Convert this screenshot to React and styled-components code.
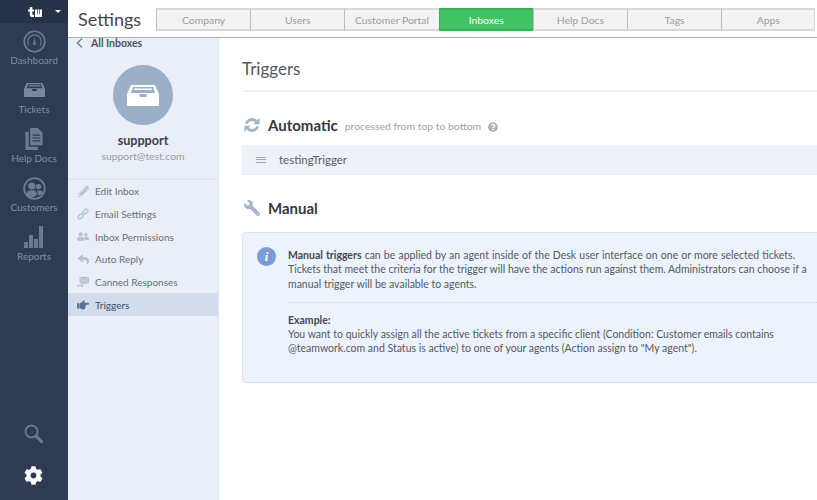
import React from 'react';
import styled, { createGlobalStyle } from 'styled-components';
import { FaCog, FaHandPointRight, FaPencilAlt, FaQuestionCircle, FaReply, FaUserFriends, FaWrench } from 'react-icons/fa';

const Global = createGlobalStyle`
  html, body { margin: 0; padding: 0; height: 500px; overflow: hidden; background: #fff; }
  body { font-family: Lato, "Open Sans", sans-serif; color: #4a4f57; }
  * { box-sizing: border-box; }
`;

const Page = styled.div`
  display: flex;
  width: 817px;
  height: 500px;
  overflow: hidden;
`;

const Rail = styled.nav`
  width: 68px;
  flex: none;
  display: flex;
  flex-direction: column;
  background: #2e3b52;
`;

const RailTop = styled.div`
  height: 23px;
  margin-bottom: 1px;
  background: #263247;
  display: flex;
  align-items: center;
  justify-content: flex-end;
  gap: 13px;
  padding-right: 7px;
`;

const Caret = styled.span`
  width: 0;
  height: 0;
  border-left: 3.5px solid transparent;
  border-right: 3.5px solid transparent;
  border-top: 3.5px solid #fff;
`;

const RailItem = styled.div`
  height: 49px;
  display: flex;
  flex-direction: column;
  align-items: center;
  justify-content: flex-end;
  padding-bottom: 6px;
  gap: 1px;
  font-size: 10px;
  line-height: 13px;
  color: #838e9e;
`;

const RailIcon = styled.div`
  height: 24px;
  display: flex;
  align-items: center;
  justify-content: center;
`;

const RailFoot = styled.div`
  margin-top: auto;
  display: flex;
  flex-direction: column;
  align-items: center;
  gap: 23px;
  padding: 0 1px 15px 0;
`;

const Content = styled.div`
  flex: 1;
  min-width: 0;
  display: flex;
  flex-direction: column;
`;

const TopBar = styled.header`
  height: 38px;
  flex: none;
  display: flex;
  padding: 8px 0 0 10px;
  border-bottom: 1px solid #adb0b3;
`;

const PageName = styled.h1`
  margin: 0;
  width: 78px;
  flex: none;
  font-size: 18px;
  font-weight: 400;
  line-height: 22px;
  color: #434850;
`;

const Tabs = styled.div`
  display: flex;
  height: 23px;
`;

const Tab = styled.div`
  width: 94.2px;
  display: flex;
  align-items: center;
  justify-content: center;
  font-size: 10.4px;
  color: ${p => (p.$active ? '#fff' : '#9a9c9f')};
  background: ${p => (p.$active ? '#40c463' : '#f3f3f3')};
  border: 1px solid ${p => (p.$active ? '#38b259' : '#d8d9da')};
  border-left-color: ${p => (p.$active ? '#38b259' : '#bcbdbe')};
  border-top-width: 2px;
  border-bottom-width: 2px;
  border-right: ${p => (p.$last ? '1px solid #d8d9da' : 'none')};
`;

const Body = styled.div`
  flex: 1;
  display: flex;
  min-height: 0;
`;

const Side = styled.aside`
  width: 151px;
  flex: none;
  background: #e9eef7;
  border-right: 1px solid #dfe4ec;
`;

const Back = styled.div`
  height: 12px;
  margin-top: -1px;
  margin-bottom: -1px;
  display: flex;
  align-items: center;
  gap: 8px;
  padding-left: 8px;
  font-size: 10.5px;
  font-weight: 700;
  color: #4f545c;
`;

const Profile = styled.div`
  height: 132px;
  display: flex;
  flex-direction: column;
  align-items: center;
  padding-top: 17px;
  border-bottom: 2px solid #e1e6ef;
`;

const Avatar = styled.div`
  width: 60px;
  height: 60px;
  border-radius: 50%;
  background: #9bafc8;
  display: flex;
  align-items: center;
  justify-content: center;
`;

const ProfileName = styled.div`
  margin-top: 8px;
  font-size: 12.6px;
  line-height: 16px;
  font-weight: 700;
  color: #3c4047;
`;

const ProfileMail = styled.div`
  font-size: 10.4px;
  line-height: 15px;
  color: #9a9da2;
`;

const MenuItem = styled.div`
  height: 22.7px;
  display: flex;
  align-items: center;
  gap: 6px;
  padding-left: 9px;
  font-size: 10px;
  color: ${p => (p.$active ? '#3f4f6b' : '#6d7176')};
  background: ${p => (p.$active ? '#d2dcec' : 'transparent')};
`;

const MenuIcon = styled.span`
  width: 12px;
  height: 12px;
  flex: none;
  display: flex;
  align-items: center;
  justify-content: center;
  color: ${p => (p.$active ? '#5b7195' : '#b4c1d4')};
`;

const Main = styled.main`
  flex: 1;
  min-width: 0;
  padding-left: 23px;
`;

const Title = styled.h2`
  margin: 0;
  height: 54px;
  padding-top: 20px;
  font-size: 17px;
  line-height: 22px;
  font-weight: 400;
  color: #56595e;
  border-bottom: 2px solid #f3f3f4;
`;

const SectionHead = styled.div`
  display: flex;
  align-items: center;
  margin-top: 23px;
  height: 20px;
`;

const SectionIcon = styled.span`
  width: 26px;
  flex: none;
  padding-left: 2px;
  display: flex;
  color: #a3b5cc;
`;

const SectionName = styled.h3`
  margin: 0;
  font-size: 15px;
  font-weight: 700;
  color: #35393f;
`;

const SectionNote = styled.span`
  margin: 1px 0 0 7px;
  font-size: 10.4px;
  color: #a0a2a6;
`;

const NoteIcon = styled.span`
  display: flex;
  margin: 3px 0 0 7px;
  color: #a7b1bf;
`;

const TriggerRow = styled.div`
  height: 30px;
  margin-top: 10px;
  display: flex;
  align-items: center;
  gap: 13px;
  padding-left: 14px;
  background: #edf1f8;
  border-bottom: 1px solid #e3e8f0;
  border-radius: 2px 0 0 2px;
  font-size: 11.5px;
  color: #5a5e64;
`;

const Grip = styled.span`
  width: 10px;
  height: 6px;
  border-top: 1px solid #a3a8b0;
  border-bottom: 1px solid #a3a8b0;
  &::after {
    content: '';
    display: block;
    height: 1px;
    margin-top: 1.5px;
    background: #a3a8b0;
  }
`;

const InfoBox = styled.section`
  margin-top: 14px;
  height: 151px;
  width: 620px;
  display: flex;
  gap: 12px;
  padding: 15px 0 0 14px;
  background: #edf3fd;
  border: 1px solid #dde3ee;
  border-radius: 3px;
`;

const InfoDot = styled.span`
  width: 19px;
  height: 19px;
  margin-top: -1px;
  flex: none;
  border-radius: 50%;
  background: #7b9bd6;
  color: #fff;
  display: flex;
  align-items: center;
  justify-content: center;
  font-family: "Liberation Serif", serif;
  font-style: italic;
  font-weight: 700;
  font-size: 13px;
`;

const InfoText = styled.div`
  flex: 1;
  font-size: 10.5px;
  line-height: 14.3px;
  color: #55595f;
  white-space: nowrap;
  p { margin: 0; }
  b { color: #45494f; }
`;

const Lead = styled.span`
  word-spacing: 0.45px;
`;

const Dots = styled.div`
  height: 1px;
  margin: 11px 0 10px;
  border-top: 1px dotted #cbd2dd;
`;

const Tray = ({ width, height, fill, cut }) => (
  <svg width={width} height={height} viewBox="0 0 32 21" preserveAspectRatio="none">
    <path d="M4 0h24l4 9H0z" fill={fill} />
    <path d="M0 9h32v11a1 1 0 0 1-1 1H1a1 1 0 0 1-1-1z" fill={fill} />
    <path d="M6 2h20l2 6H4z" fill={cut} />
    <path d="M7.2 3.5h17.6l.5 1.6H6.7z" fill={fill} />
    <path d="M12.5 9h7v2a1 1 0 0 1-1 1h-5a1 1 0 0 1-1-1z" fill={cut} />
  </svg>
);

const DashboardIcon = () => (
  <svg width="23" height="23" viewBox="0 0 24 24" fill="none" stroke="#6f7b8d">
    <circle cx="12" cy="12" r="10.7" strokeWidth="1.8" />
    <path d="M6.2 16a7 7 0 1 1 11.6 0" strokeWidth="1.2" />
    <path d="M12 7.5l1.4 7a1.4 1.4 0 1 1-2.8 0z" fill="#6f7b8d" stroke="none" />
  </svg>
);

const DocsIcon = () => (
  <svg width="18" height="22" viewBox="0 0 18 23" fill="#6f7b8d">
    <path d="M5 0h8l5 5v13H5z" />
    <path d="M0 4h3.5v15.5H13V23H0z" />
    <path d="M7.5 7.5h8M7.5 10.5h8M7.5 13.5h8" stroke="#2e3b52" strokeWidth="1.2" />
  </svg>
);

const CustomersIcon = () => (
  <svg width="23" height="23" viewBox="0 0 23 23" fill="#6f7b8d">
    <circle cx="11.5" cy="11.5" r="10.3" fill="none" stroke="#6f7b8d" strokeWidth="1.8" />
    <circle cx="8.8" cy="9" r="3.6" />
    <circle cx="15.6" cy="9.6" r="2.7" />
    <path d="M3.6 17.5c.2-2.6 1.6-3.8 3.4-4.2h3.6c1.8.4 3.2 1.6 3.4 4.2-1.4 2-3 2.7-5.2 2.7s-3.8-.7-5.2-2.7z" />
    <path d="M14.8 18.6c.5-2.5-.4-4.3-1-5.2h3.8c1.4.4 2.2 1.4 2.3 3.2-1 .9-3 1.9-5.1 2z" />
  </svg>
);

const ReportsIcon = () => (
  <svg width="20" height="22" viewBox="0 0 20 22" fill="#6f7b8d">
    <rect x="0" y="16" width="4" height="6" />
    <rect x="5" y="9" width="4" height="13" />
    <rect x="10" y="13" width="4" height="9" />
    <rect x="15" y="0" width="4" height="22" />
  </svg>
);

const SearchIcon = () => (
  <svg width="19" height="19" viewBox="0 0 19 19" fill="none" stroke="#6c7889">
    <circle cx="7.5" cy="7.5" r="6" strokeWidth="2" />
    <path d="M12 12l6 6" strokeWidth="3" strokeLinecap="round" />
  </svg>
);

const LinkIcon = () => (
  <svg width="14" height="14" viewBox="0 0 14 14" fill="none" stroke="#b4c1d4" strokeWidth="1.5">
    <rect x="-3.2" y="-2" width="6.4" height="4" rx="2" transform="translate(4.2 9.8) rotate(-45)" />
    <rect x="-3.2" y="-2" width="6.4" height="4" rx="2" transform="translate(9.8 4.2) rotate(-45)" />
  </svg>
);

const CannedIcon = () => (
  <svg width="14" height="12" viewBox="0 0 14 12" fill="#b4c1d4">
    <path d="M3 0h11v8H3z" />
    <path d="M3 .5l5.5 4 5.5-4M3 8l4-4M14 8l-4-4" fill="none" stroke="#e9eef7" strokeWidth=".8" />
    <path d="M0 9.5h5V8l3 2.2L5 12v-1H0z" />
  </svg>
);

const SyncIcon = () => (
  <svg width="16" height="16" viewBox="0 0 16 16" fill="#a3b5cc">
    <path d="M2.4 6.6A5.8 5.8 0 0 1 12.4 4.6" fill="none" stroke="#a3b5cc" strokeWidth="2.8" />
    <path d="M15.6 1v6.2H9.4z" />
    <path d="M13.6 9.4A5.8 5.8 0 0 1 3.6 11.4" fill="none" stroke="#a3b5cc" strokeWidth="2.8" />
    <path d="M.4 15V8.8h6.2z" />
  </svg>
);

const railItems = [
  { label: 'Dashboard', icon: <DashboardIcon /> },
  { label: 'Tickets', icon: <Tray width={21} height={14} fill="#7b8798" cut="#2e3b52" /> },
  { label: 'Help Docs', icon: <DocsIcon /> },
  { label: 'Customers', icon: <CustomersIcon /> },
  { label: 'Reports', icon: <ReportsIcon /> },
];

const tabs = ['Company', 'Users', 'Customer Portal', 'Inboxes', 'Help Docs', 'Tags', 'Apps'];

const menu = [
  { label: 'Edit Inbox', icon: <FaPencilAlt size={11} /> },
  { label: 'Email Settings', icon: <LinkIcon /> },
  { label: 'Inbox Permissions', icon: <FaUserFriends size={13} /> },
  { label: 'Auto Reply', icon: <FaReply size={11} /> },
  { label: 'Canned Responses', icon: <CannedIcon /> },
  { label: 'Triggers', icon: <FaHandPointRight size={14} />, active: true },
];

export default function App() {
  return (
    <Page>
      <Global />
      <Rail>
        <RailTop>
          <svg width="14" height="10" viewBox="0 0 14 10" fill="#fff">
            <path d="M0 2.5h1.8V0h2.5v2.5H6v2H4.3V7q0 1 1.7 1v2H4Q1.8 10 1.8 8V4.5H0z" />
            <path d="M7 2.5h2v5h.6v-5h1.7v5h.6v-5H14V10H7z" />
          </svg>
          <Caret />
        </RailTop>
        {railItems.map(item => (
          <RailItem key={item.label}>
            <RailIcon>{item.icon}</RailIcon>
            {item.label}
          </RailItem>
        ))}
        <RailFoot>
          <SearchIcon />
          <FaCog size={19} color="#fff" />
        </RailFoot>
      </Rail>
      <Content>
        <TopBar>
          <PageName>Settings</PageName>
          <Tabs>
            {tabs.map((tab, i) => (
              <Tab key={tab} $active={tab === 'Inboxes'} $last={i === tabs.length - 1}>{tab}</Tab>
            ))}
          </Tabs>
        </TopBar>
        <Body>
          <Side>
            <Back>
              <svg width="7" height="10" viewBox="0 0 7 10" fill="none" stroke="#7d838c" strokeWidth="1.5">
                <path d="M6 .5L1.5 5 6 9.5" />
              </svg>
              All Inboxes
            </Back>
            <Profile>
              <Avatar><Tray width={32} height={21} fill="#fff" cut="#9bafc8" /></Avatar>
              <ProfileName>suppport</ProfileName>
              <ProfileMail>support@test.com</ProfileMail>
            </Profile>
            {menu.map(item => (
              <MenuItem key={item.label} $active={item.active}>
                <MenuIcon $active={item.active}>{item.icon}</MenuIcon>
                {item.label}
              </MenuItem>
            ))}
          </Side>
          <Main>
            <Title>Triggers</Title>
            <SectionHead>
              <SectionIcon><SyncIcon /></SectionIcon>
              <SectionName>Automatic</SectionName>
              <SectionNote>processed from top to bottom</SectionNote>
              <NoteIcon><FaQuestionCircle size={10} /></NoteIcon>
            </SectionHead>
            <TriggerRow>
              <Grip />
              testingTrigger
            </TriggerRow>
            <SectionHead>
              <SectionIcon><FaWrench size={16} style={{ transform: 'scaleX(-1)' }} /></SectionIcon>
              <SectionName>Manual</SectionName>
            </SectionHead>
            <InfoBox>
              <InfoDot>i</InfoDot>
              <InfoText>
                <p>
                  <Lead><b>Manual triggers</b> can be applied by an agent inside of the Desk user interface on one or more selected tickets.</Lead><br />
                  Tickets that meet the criteria for the trigger will have the actions run against them. Administrators can choose if a<br />
                  manual trigger will be available to agents.
                </p>
                <Dots />
                <p>
                  <b>Example:</b><br />
                  You want to quickly assign all the active tickets from a specific client (Condition: Customer emails contains<br />
                  @teamwork.com and Status is active) to one of your agents (Action assign to "My agent").
                </p>
              </InfoText>
            </InfoBox>
          </Main>
        </Body>
      </Content>
    </Page>
  );
}
